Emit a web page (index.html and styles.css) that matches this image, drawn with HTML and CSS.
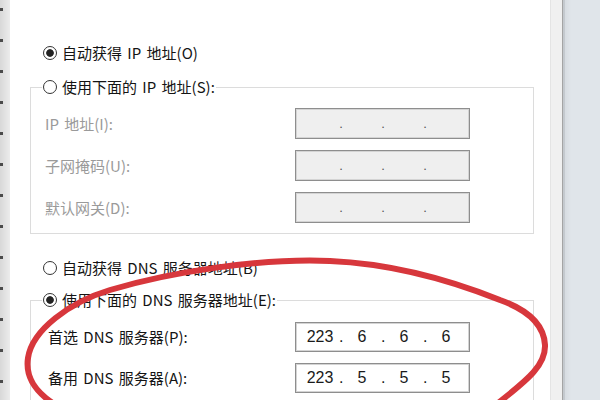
FILE: index.html
```html
<!DOCTYPE html>
<html lang="zh-CN">
<head>
<meta charset="utf-8">
<title>Internet 协议版本 4 (TCP/IPv4) 属性</title>
<link rel="stylesheet" href="styles.css">
</head>
<body>
<div class="screen">
  <div class="edge-left"></div>
  <main class="dialog">
    <div class="radio-row solo first"><span class="radio checked"></span><span class="rlabel">自动获得 IP 地址(O)</span></div>
    <fieldset class="group g1">
      <legend><span class="radio-row"><span class="radio"></span><span class="rlabel">使用下面的 IP 地址(S):</span></span></legend>
      <div class="grid">
        <span class="flabel disabled">IP 地址(I):</span>
        <div class="ipbox off"><span class="oct"></span><span class="dot">.</span><span class="oct"></span><span class="dot">.</span><span class="oct"></span><span class="dot">.</span><span class="oct"></span></div>
        <span class="flabel disabled">子网掩码(U):</span>
        <div class="ipbox off"><span class="oct"></span><span class="dot">.</span><span class="oct"></span><span class="dot">.</span><span class="oct"></span><span class="dot">.</span><span class="oct"></span></div>
        <span class="flabel disabled">默认网关(D):</span>
        <div class="ipbox off"><span class="oct"></span><span class="dot">.</span><span class="oct"></span><span class="dot">.</span><span class="oct"></span><span class="dot">.</span><span class="oct"></span></div>
      </div>
    </fieldset>
    <div class="radio-row solo third"><span class="radio"></span><span class="rlabel">自动获得 DNS 服务器地址(B)</span></div>
    <fieldset class="group g2">
      <legend><span class="radio-row"><span class="radio checked"></span><span class="rlabel">使用下面的 DNS 服务器地址(E):</span></span></legend>
      <div class="grid dns">
        <span class="flabel dl">首选 DNS 服务器(P):</span>
        <div class="ipbox"><span class="oct">223</span><span class="dot">.</span><span class="oct">6</span><span class="dot">.</span><span class="oct">6</span><span class="dot">.</span><span class="oct">6</span></div>
        <span class="flabel dl">备用 DNS 服务器(A):</span>
        <div class="ipbox"><span class="oct">223</span><span class="dot">.</span><span class="oct">5</span><span class="dot">.</span><span class="oct">5</span><span class="dot">.</span><span class="oct">5</span></div>
      </div>
    </fieldset>
  </main>
  <div class="frame-strip"></div>
  <div class="side-panel"></div>
  <svg class="annotation" width="600" height="400" viewBox="0 0 600 400" aria-hidden="true">
    <path d="M 497 404 C 520 385, 546 368, 545 345 C 544 325, 528 310, 500 300 C 460 284, 400 264, 330 261 C 260 258, 170 272, 110 290 C 70 302, 32 330, 28 358 C 25 378, 36 392, 54 404" fill="none" stroke="#d7373c" stroke-width="6" stroke-linecap="round"/>
  </svg>
</div>
</body>
</html>
```
FILE: styles.css
```css
html, body {
  margin: 0;
  padding: 0;
  background: #fff;
}

.screen {
  position: relative;
  width: 600px;
  height: 400px;
  display: flex;
  overflow: hidden;
  font-family: "Noto Sans CJK SC", "Noto Sans", sans-serif;
  font-size: 15px;
  font-weight: 400;
  color: #141414;
}

.edge-left {
  width: 10px;
  flex: none;
  background:
    repeating-linear-gradient(to bottom, transparent 0 8px, #4a4a4a 8px 11px, transparent 11px 31px) left top / 3px 100% no-repeat,
    linear-gradient(to right, #d8d8d8, #ececec);
}

.dialog {
  width: 540px;
  flex: none;
  box-sizing: border-box;
  padding: 42px 0 0 20px;
  background: #fff;
  display: flex;
  flex-direction: column;
  align-items: flex-start;
}

.frame-strip {
  width: 15px;
  flex: none;
  background: linear-gradient(to right, #e4e4e4 0 1px, #f0f0f0 1px 12px, #a4a4a4 12px 13px, #c4c9ce 13px 15px);
}

.side-panel {
  flex: 1;
  background: linear-gradient(to right, #d7dce1, #e0e5ea 6px);
}

.radio-row {
  display: flex;
  align-items: center;
  gap: 5px;
  height: 22px;
  line-height: 22px;
  white-space: nowrap;
  word-spacing: 2px;
}

.solo { margin-left: 13px; }
.third { margin-top: 23px; }

.radio {
  width: 14px;
  height: 14px;
  flex: none;
  box-sizing: border-box;
  border: 1px solid #333;
  border-radius: 50%;
  background: #fff;
}

.radio.checked {
  background: radial-gradient(circle, #222 0 3.4px, #fff 4.2px);
}

.group {
  margin: 0;
  padding: 0;
  width: 504px;
  min-width: 0;
  box-sizing: border-box;
  border: 1px solid #dcdcdc;
}

.g1 { margin-top: 12px; }
.g2 { margin-top: 10px; }

.group legend {
  margin-left: 11px;
  padding: 0 1px;
}

.grid {
  display: grid;
  grid-template-columns: 264px 175px;
  grid-auto-rows: 31px;
  row-gap: 11px;
  padding: 10px 0 10px 0;
  align-items: center;
}

.grid.dns {
  grid-auto-rows: 30px;
  padding: 11px 0 30px 0;
}

.flabel {
  padding-left: 14px;
  line-height: 22px;
  white-space: nowrap;
  word-spacing: 2px;
}

.flabel.dl { padding-left: 17px; }

.disabled { color: #9a9a9a; }

.ipbox {
  height: 100%;
  box-sizing: border-box;
  display: flex;
  align-items: center;
  padding-left: 5px;
  border: 1px solid #8e8e8e;
  box-shadow: inset 0 0 0 1px #d4d4d4;
  background: #fff;
  font-family: "Liberation Sans", Arial, sans-serif;
  font-size: 16px;
  font-weight: 400;
  color: #1a1a1a;
}

.ipbox.off {
  background: #efefef;
  color: #555;
  font-size: 13px;
}

.oct {
  width: 38px;
  text-align: center;
}

.dot {
  width: 4px;
  text-align: center;
}

.annotation {
  position: absolute;
  left: 0;
  top: 0;
  pointer-events: none;
}
```
